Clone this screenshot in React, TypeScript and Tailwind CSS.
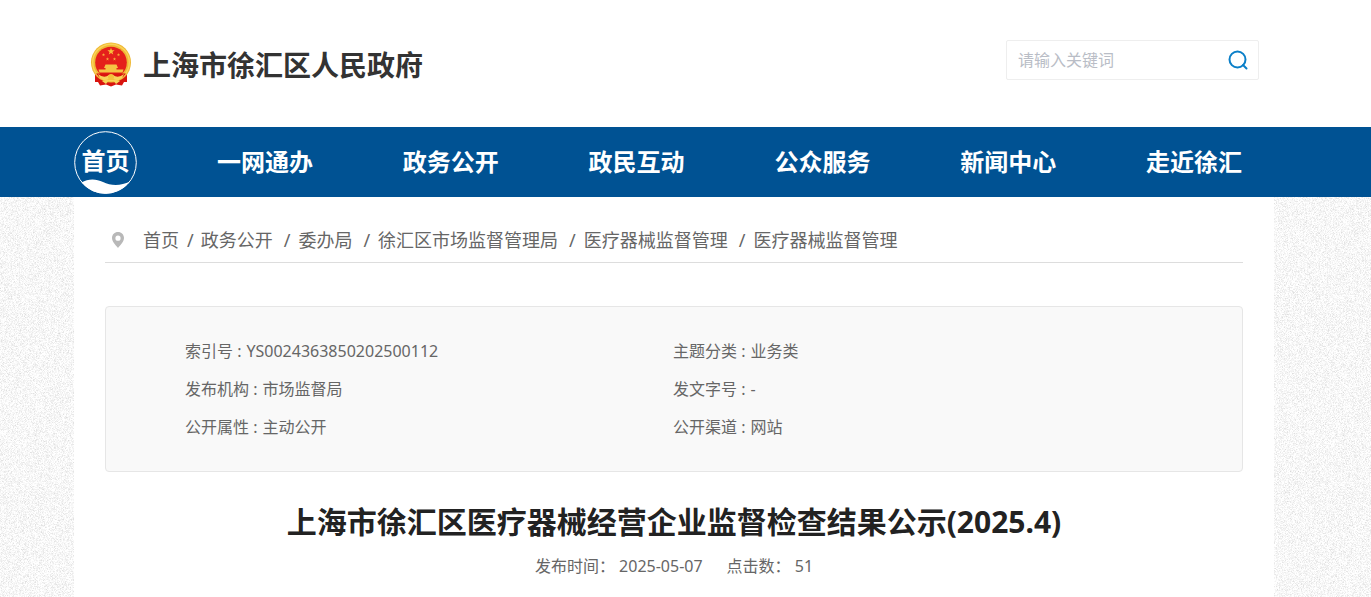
import { useState } from "react"

const fontClass = "font-['Noto_Sans','Noto_Sans_CJK_SC',sans-serif]"

interface NavLink {
    name: string
    href: string
}

const navLinkData: NavLink[] = [
    { name: "一网通办", href: "#ywtb" },
    { name: "政务公开", href: "#zwgk" },
    { name: "政民互动", href: "#zmhd" },
    { name: "公众服务", href: "#gzfw" },
    { name: "新闻中心", href: "#xwzx" },
    { name: "走近徐汇", href: "#zjxh" },
]

const crumbs: string[] = [
    "首页",
    "政务公开",
    "委办局",
    "徐汇区市场监督管理局",
    "医疗器械监督管理",
    "医疗器械监督管理",
]

const infoData = [
    { label: "索引号", value: "YS0024363850202500112" },
    { label: "主题分类", value: "业务类" },
    { label: "发布机构", value: "市场监督局" },
    { label: "发文字号", value: "-" },
    { label: "公开属性", value: "主动公开" },
    { label: "公开渠道", value: "网站" },
]

const starPath = "M0 -1L0.24 -0.32L0.95 -0.31L0.38 0.12L0.59 0.81L0 0.4L-0.59 0.81L-0.38 0.12L-0.95 -0.31L-0.24 -0.32Z"

const Emblem = () => (
    <svg viewBox="0 0 42 46" className="h-[46px] w-[42px] shrink-0" aria-hidden="true">
        <path d="M5 29L5 40L8 40L10 43.5L16 42.5L21 44.5L26 42.5L32 43.5L34 40L37 40L37 29Z" fill="#d9140f" />
        <circle cx="21" cy="20.5" r="20" fill="#efb935" />
        <circle cx="21" cy="20.5" r="18.3" fill="none" stroke="#fbd45a" strokeWidth="1.4" />
        <circle cx="21" cy="20.5" r="15.8" fill="#e5201b" />
        <path d={starPath} transform="translate(21 9.5) scale(3.8)" fill="#f8c03c" />
        <path d={starPath} transform="translate(13.5 12.8) scale(1.7)" fill="#f8b03c" />
        <path d={starPath} transform="translate(28.5 12.8) scale(1.7)" fill="#f8b03c" />
        <path d={starPath} transform="translate(17.5 17) scale(1.7)" fill="#f8b03c" />
        <path d={starPath} transform="translate(24.5 17) scale(1.7)" fill="#f8b03c" />
        <path d="M15.5 22.5H26.5L28 26H14Z M15.5 26H26.5V27.5H33.5L32.5 30.5H9.5L8.5 27.5H15.5Z" fill="#f5c444" />
        <path d="M6 31.5H36L33 35Q28 38 21 35Q14 38 9 35Z" fill="#d9140f" />
        <path d="M8 32Q14 37 19 33H23Q28 37 34 32L32 36Q27 39 23 37L21 38L19 37Q15 39 10 36Z" fill="#f8d35a" />
        <circle cx="21" cy="35" r="3" fill="#f3c23c" />
        <path d="M12 39L19 38L16 42Z M30 39L23 38L26 42Z" fill="#f8d35a" />
    </svg>
)

const PinIcon = () => (
    <svg viewBox="0 0 12 16" className="h-4 w-3 shrink-0" aria-hidden="true">
        <path
            d="M6 0C2.6 0 0 2.6 0 6C0 9.6 3.6 13 6 16C8.4 13 12 9.6 12 6C12 2.6 9.4 0 6 0ZM6 3.6A2.6 2.6 0 1 1 6 8.8A2.6 2.6 0 1 1 6 3.6Z"
            fill="#b8b8b8"
            fillRule="evenodd"
        />
    </svg>
)

// white circle outline with a wave filling the bottom
const HomeBadge = () => (
    <svg viewBox="0 0 63 63" className="absolute inset-0 h-full w-full" aria-hidden="true">
        <circle cx="31.5" cy="31.5" r="30.8" fill="none" stroke="#fff" />
        <path d="M7.5 51.5C14 47.5 22 47.5 29 51C37 55 47 55 56 50.5A31 31 0 0 1 7.5 51.5Z" fill="#fff" />
    </svg>
)

const PaperTexture = () => (
    <svg className="absolute inset-0 -z-10 h-full w-full" aria-hidden="true">
        <filter id="paper" x="0" y="0" width="100%" height="100%" colorInterpolationFilters="sRGB">
            <feTurbulence type="fractalNoise" baseFrequency="1.37" numOctaves={3} seed={4} />
            <feColorMatrix values="0.3 0 0 0 0.82  0.3 0 0 0 0.82  0.3 0 0 0 0.82  0 0 0 0 1" />
        </filter>
        <rect width="100%" height="100%" filter="url(#paper)" />
    </svg>
)

const SearchBox = () => {
    const [keyword, setKeyword] = useState("")

    return (
        <form
            className="flex h-10 w-[253px] items-center rounded-xs border border-[#eeeeee] pl-[11px] pr-2"
            onSubmit={(e) => e.preventDefault()}
        >
            <input
                type="text"
                aria-label="搜索"
                placeholder="请输入关键词"
                value={keyword}
                onChange={(e) => setKeyword(e.target.value)}
                className="min-w-0 flex-1 text-base text-[#666666] outline-none placeholder:text-[#b9bdc6]"
            />
            <button type="submit" aria-label="提交搜索" className="flex size-6 cursor-pointer items-center justify-center">
                <svg viewBox="0 0 20 20" className="size-5" fill="none" stroke="#0a7fc8" strokeWidth="2" aria-hidden="true">
                    <circle cx="9.5" cy="9.5" r="8" />
                    <path d="M15 15L18.5 18.5" strokeLinecap="round" />
                </svg>
            </button>
        </form>
    )
}

const Header = () => (
    <header className="bg-white pr-[23px]">
        <div className="mx-auto flex max-w-[1200px] items-start justify-between pb-[39px] pl-4 pr-[15px] pt-10">
            <a href="#home" className="flex items-center gap-[11px] pt-[2px]">
                <Emblem />
                <span className="text-[28px] leading-[46px] font-bold text-[#333333]">上海市徐汇区人民政府</span>
            </a>
            <SearchBox />
        </div>
    </header>
)

const Nav = () => (
    <nav className="bg-[#005293] pr-[23px] text-2xl font-bold text-white">
        <div className="mx-auto flex h-[70px] max-w-[1200px] items-center">
            <a href="#home" className="relative flex size-[63px] shrink-0 items-center justify-center">
                <HomeBadge />
                <span className="relative pb-[2px]">首页</span>
            </a>
            <ul className="flex flex-1 justify-between pl-20 pr-8">
                {navLinkData.map(({ name, href }) => (
                    <li key={name}>
                        <a href={href}>{name}</a>
                    </li>
                ))}
            </ul>
        </div>
    </nav>
)

const Breadcrumb = () => (
    <div className="flex items-center border-b border-[#dddddd] pb-2 pl-[7px] pt-[29px] text-lg text-[#666666]">
        <PinIcon />
        <ol className="flex pl-[19px]">
            {crumbs.map((name, i) => (
                <li key={i} className="flex">
                    {i > 0 && <span className={i > 1 ? "pl-[11px] pr-2" : "pl-2 pr-[7px]"}>/</span>}
                    <a href={`#crumb-${i}`}>{name}</a>
                </li>
            ))}
        </ol>
    </div>
)

export default function App() {
    return (
        <div className={`relative isolate flex min-h-screen flex-col ${fontClass}`}>
            <PaperTexture />
            <Header />
            <Nav />

            <div className="flex flex-1 pr-[23px]">
                <main className="mx-auto w-full max-w-[1200px] bg-white px-[31px] pb-5">
                    <Breadcrumb />

                    <dl className="mt-[43px] grid grid-cols-2 rounded-sm border border-[#e6e6e6] bg-[#f9f9f9] py-[25px] pl-[79px] pr-[81px] text-base text-[#666666]">
                        {infoData.map(({ label, value }) => (
                            <div key={label} className="flex gap-[5px] leading-[38px]">
                                <dt>{label} :</dt>
                                <dd>{value}</dd>
                            </div>
                        ))}
                    </dl>

                    <h1 className="mt-7 text-center text-3xl leading-[44px] font-bold text-[#222222]">
                        上海市徐汇区医疗器械经营企业监督检查结果公示(2025.4)
                    </h1>
                    <p className="mt-[10px] flex justify-center gap-6 text-base text-[#666666]">
                        <span>发布时间： 2025-05-07</span>
                        <span>点击数： 51</span>
                    </p>
                </main>
            </div>
        </div>
    )
}
